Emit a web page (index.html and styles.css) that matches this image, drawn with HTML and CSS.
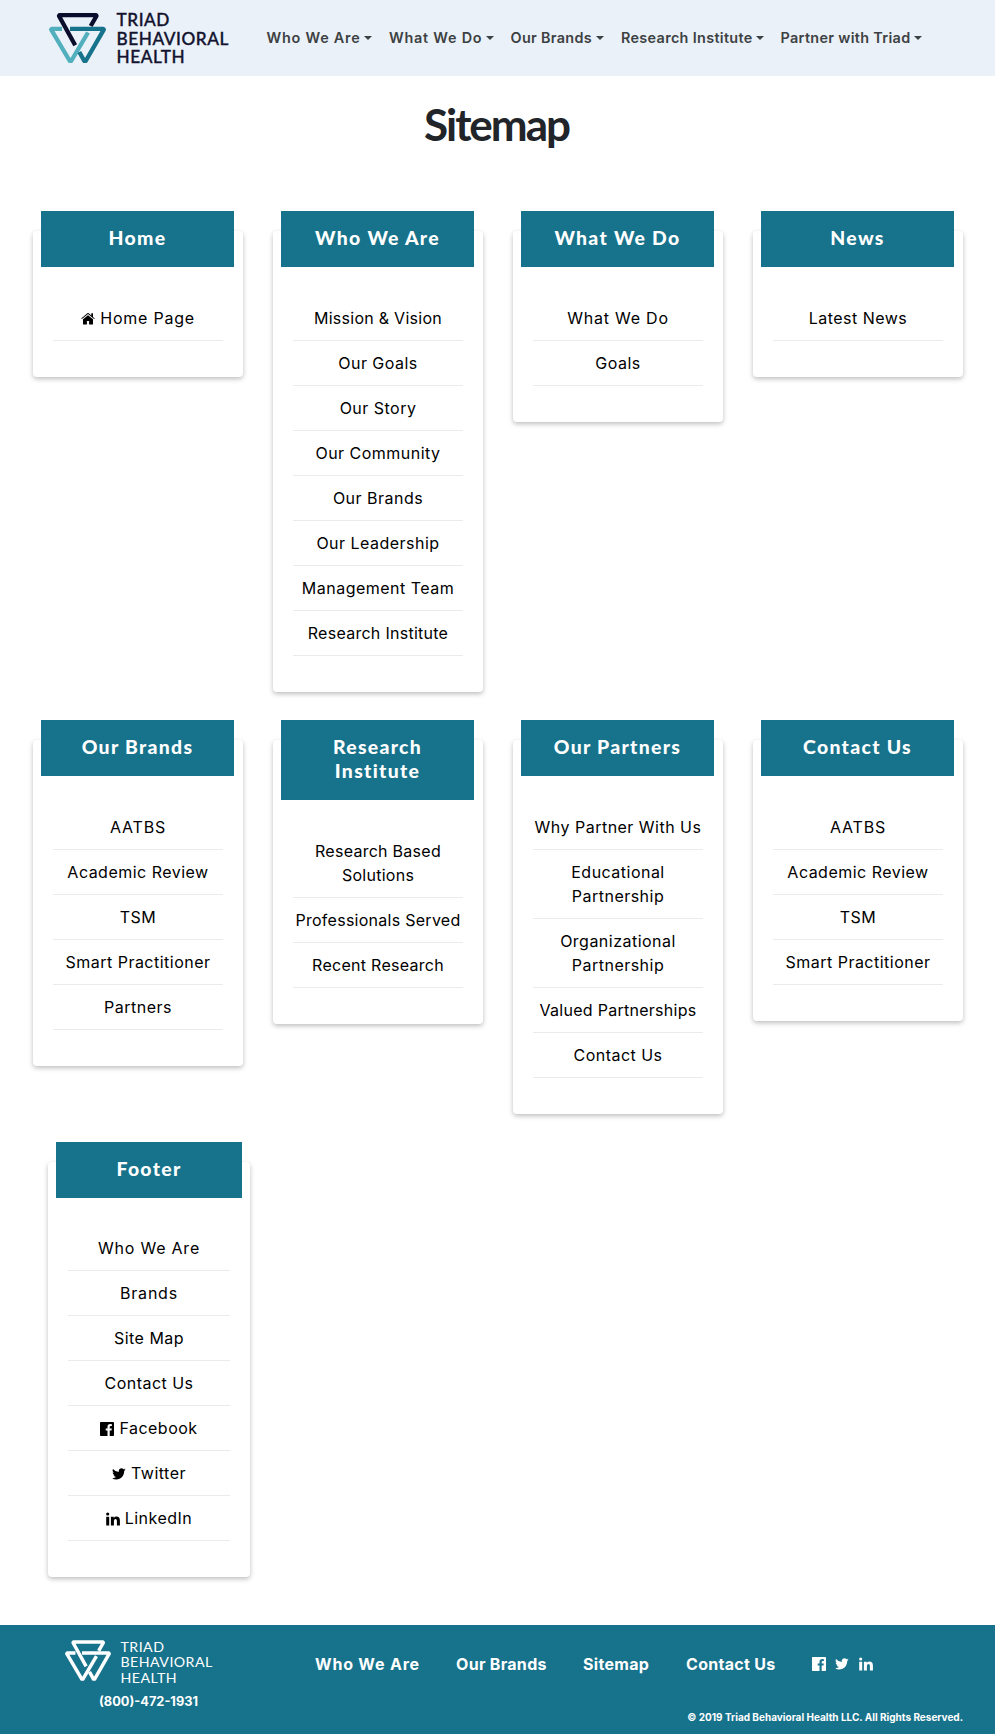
FILE: index.html
```html
<!DOCTYPE html>
<html lang="en">
<head>
<meta charset="utf-8">
<title>Sitemap</title>
<link rel="stylesheet" href="styles.css">
</head>
<body>
<svg width="0" height="0" class="defs">
  <symbol id="mark" viewBox="0 0 57 50">
    <path class="m-dark" d="M41.7 13 47.5 3 47 2.2H10.5L10 3 26.2 32.2"/>
    <path class="m-light" d="M13 15.8H2.8L2.2 16.6 20.8 48H22.2L39 19.5"/>
    <path class="m-teal" d="M21 15.8H54.2L54.8 16.6 36.7 48H35.3L30.3 39"/>
  </symbol>
  <symbol id="home" viewBox="0 0 14 13"><path d="M7 3.2 2 7.3V12q0 .5.5.5H5.9V9H8.1V12.5H11.5q.5 0 .5-.5V7.3ZM13.8 6.4 12 4.9V1.2H10.3V3.4L7.7 1.2Q7 .7 6.3 1.2L.2 6.4.9 7.1 7 2.1 13.1 7.1Z"/></symbol>
  <symbol id="facebook" viewBox="0 0 14 14"><path d="M.8 0H13.2Q14 0 14 .8V13.2Q14 14 13.2 14H9.7V8.6H11.5L11.8 6.5H9.7V5.1Q9.7 4.1 10.8 4.1H11.9V2.2L10.3 2.1Q7.5 2.1 7.5 4.9V6.5H5.7V8.6H7.5V14H.8Q0 14 0 13.2V.8Q0 0 .8 0Z"/></symbol>
  <symbol id="twitter" viewBox="0 0 14 12"><path d="M13.6 1.5Q13 2.4 12.2 2.9C12.4 7.3 9.2 11.4 4.4 11.4Q2 11.4.1 10.2 2.4 10.4 4.2 9.1 2.3 8.9 1.6 7.2H2.8Q.7 6.5.6 4.4L1.8 4.7Q-.1 3 1 .9 3.4 3.7 6.8 3.9C6.2 1.2 9.4-.9 11.5 1.2L13.3.5Q13 1.4 12.1 2Z"/></symbol>
  <symbol id="linkedin" viewBox="0 0 14 14"><path d="M.2 4.7H3.2V13.5H.2ZM1.7.4A1.6 1.55 0 1 1 1.7 3.5 1.6 1.55 0 0 1 1.7.4ZM4.9 4.7H7.8V5.9Q8.7 4.5 10.4 4.5C12.8 4.5 13.9 6 13.9 8.5V13.5H10.9V8.8Q10.9 6.9 9.5 6.9T7.9 8.8V13.5H4.9Z"/></symbol>
</svg>

<header class="topbar">
  <a class="logo"><svg class="mark"><use href="#mark"/></svg><span>TRIAD<br>BEHAVIORAL<br>HEALTH</span></a>
  <nav class="menu">
    <a class="wide">Who We Are</a><a class="wide">What We Do</a><a>Our Brands</a><a>Research Institute</a><a>Partner with Triad</a>
  </nav>
</header>

<main>
  <h1>Sitemap</h1>
  <div class="row row-1">
    <section class="card"><h2>Home</h2><ul><li class="wide"><svg class="icon home"><use href="#home"/></svg> Home Page</li></ul></section>
    <section class="card"><h2>Who We Are</h2><ul><li class="tight">Mission &amp; Vision</li><li>Our Goals</li><li>Our Story</li><li>Our Community</li><li>Our Brands</li><li>Our Leadership</li><li>Management Team</li><li class="tight">Research Institute</li></ul></section>
    <section class="card"><h2>What We Do</h2><ul><li class="wide">What We Do</li><li>Goals</li></ul></section>
    <section class="card"><h2>News</h2><ul><li>Latest News</li></ul></section>
  </div>
  <div class="row row-2">
    <section class="card"><h2>Our Brands</h2><ul><li class="wide">AATBS</li><li>Academic Review</li><li>TSM</li><li>Smart Practitioner</li><li>Partners</li></ul></section>
    <section class="card"><h2>Research<br>Institute</h2><ul><li class="tight">Research Based<br>Solutions</li><li class="tight">Professionals Served</li><li class="tight">Recent Research</li></ul></section>
    <section class="card"><h2>Our Partners</h2><ul><li>Why Partner With Us</li><li>Educational<br>Partnership</li><li>Organizational<br>Partnership</li><li class="tight">Valued Partnerships</li><li>Contact Us</li></ul></section>
    <section class="card"><h2>Contact Us</h2><ul><li class="wide">AATBS</li><li>Academic Review</li><li>TSM</li><li>Smart Practitioner</li></ul></section>
  </div>
  <div class="row row-3">
    <section class="card"><h2>Footer</h2><ul><li class="wide">Who We Are</li><li class="wide">Brands</li><li>Site Map</li><li>Contact Us</li><li><svg class="icon"><use href="#facebook"/></svg> Facebook</li><li><svg class="icon tw"><use href="#twitter"/></svg> Twitter</li><li><svg class="icon"><use href="#linkedin"/></svg> LinkedIn</li></ul></section>
  </div>
</main>

<footer class="footer">
  <div class="brand">
    <a class="logo small"><svg class="mark"><use href="#mark"/></svg><span>TRIAD<br>BEHAVIORAL<br>HEALTH</span></a>
    <p class="phone">(800)-472-1931</p>
  </div>
  <div class="foot-main">
    <nav class="foot-nav"><a class="wide">Who We Are</a><a>Our Brands</a><a>Sitemap</a><a>Contact Us</a>
      <span class="social"><svg class="icon"><use href="#facebook"/></svg><svg class="icon tw"><use href="#twitter"/></svg><svg class="icon"><use href="#linkedin"/></svg></span>
    </nav>
    <p class="copy">© 2019 Triad Behavioral Health LLC. All Rights Reserved.</p>
  </div>
</footer>
</body>
</html>
```
FILE: styles.css
```css
* { box-sizing: border-box; }
body { margin: 0; background: #fff; color: #000; font: 16px/24px Inter, "Liberation Sans", sans-serif; }
h1, h2, p, ul { margin: 0; padding: 0; }
ul { list-style: none; }
.defs { display: block; position: absolute; }
.m-dark, .m-light, .m-teal { fill: none; stroke-width: 4.3; stroke-linejoin: round; }
.m-dark { stroke: var(--m1); }
.m-light { stroke: var(--m2); }
.m-teal { stroke: var(--m3); }

.topbar { height: 76px; background: #eaf1f8; display: flex; padding-left: 49px; }
.logo { --m1: #0a0d2c; --m2: #52afbe; --m3: #17728b; display: flex; width: 217.5px; padding-top: 13px; gap: 10.5px; font: 500 17.2px/18.6px Lato, sans-serif; letter-spacing: .55px; color: #13132f; -webkit-text-stroke: .35px currentColor; }
.logo .mark { width: 57px; height: 50px; flex: none; }
.logo span { margin-top: -2px; }
.menu { display: grid; grid-template-columns: 122.5px 121.5px 110.5px 159.5px 150px; padding-top: 26px; font-size: 14.4px; font-weight: 600; letter-spacing: .33px; color: #3d4143; white-space: nowrap; }
.menu .wide { letter-spacing: .77px; }
.menu a::after { content: ""; display: inline-block; margin-left: 3.6px; vertical-align: 3.5px; border: 4.3px solid transparent; border-top-color: #3d4143; border-bottom: 0; }

h1 { height: 135px; padding-top: 21px; text-align: center; font: 700 44px/54px Lato, sans-serif; color: #212529; letter-spacing: -2px; text-indent: -2px; }
.row { display: grid; grid-template-columns: repeat(4, 210px); column-gap: 30px; align-items: start; padding-left: 33px; }
.row-1 { height: 509px; }
.row-2 { height: 422px; }
.row-3 { height: 483px; padding-left: 48px; grid-template-columns: 202px; }
.card { margin-top: 20px; padding: 0 20px 36px; border-radius: 4px; background: #fff; box-shadow: 0 2px 5px rgba(0,0,0,.26); text-align: center; }
.card h2 { margin: -20px -11px 29px -12px; padding: 15px 10px 17px; background: #17728b; color: #fff; font: 900 19.4px/24px Lato, sans-serif; letter-spacing: 1.3px; }
.row-3 h2 { margin: -20px -12px 28px -12px; }
.card li { padding: 10px 0; border-bottom: 1px solid #ebebeb; white-space: nowrap; letter-spacing: .48px; }
.card .wide { letter-spacing: .78px; }
.card .tight { letter-spacing: .27px; }
.icon { width: 14px; height: 14px; fill: currentColor; vertical-align: -2px; }
.icon.home { height: 13px; vertical-align: -1px; }
.icon.tw { height: 12px; vertical-align: -1px; }

.footer { height: 109px; background: #17728b; color: #fff; display: flex; padding-left: 65px; }
.brand { width: 250px; }
.logo.small { --m1: #fff; --m2: #fff; --m3: #fff; width: auto; padding-top: 15px; color: #fff; font-size: 14.2px; line-height: 15.3px; font-weight: 400; gap: 9.5px; letter-spacing: .45px; -webkit-text-stroke: 0; }
.small .mark { width: 46px; height: 41px; }
.small span { margin-top: -1px; }
.phone { margin: 5px 0 0 34px; font-weight: 700; font-size: 12.8px; line-height: 24px; }
.foot-main { width: 648px; }
.foot-nav { display: grid; grid-template-columns: 141px 127px 103px 125.5px auto; padding-top: 27px; font-weight: 700; font-size: 16px; letter-spacing: .3px; }
.foot-nav .wide { letter-spacing: .8px; }
.social { display: flex; gap: 9.5px; align-items: center; }
.copy { margin-top: 29px; text-align: right; font-weight: 700; font-size: 10px; line-height: 24px; }
```
